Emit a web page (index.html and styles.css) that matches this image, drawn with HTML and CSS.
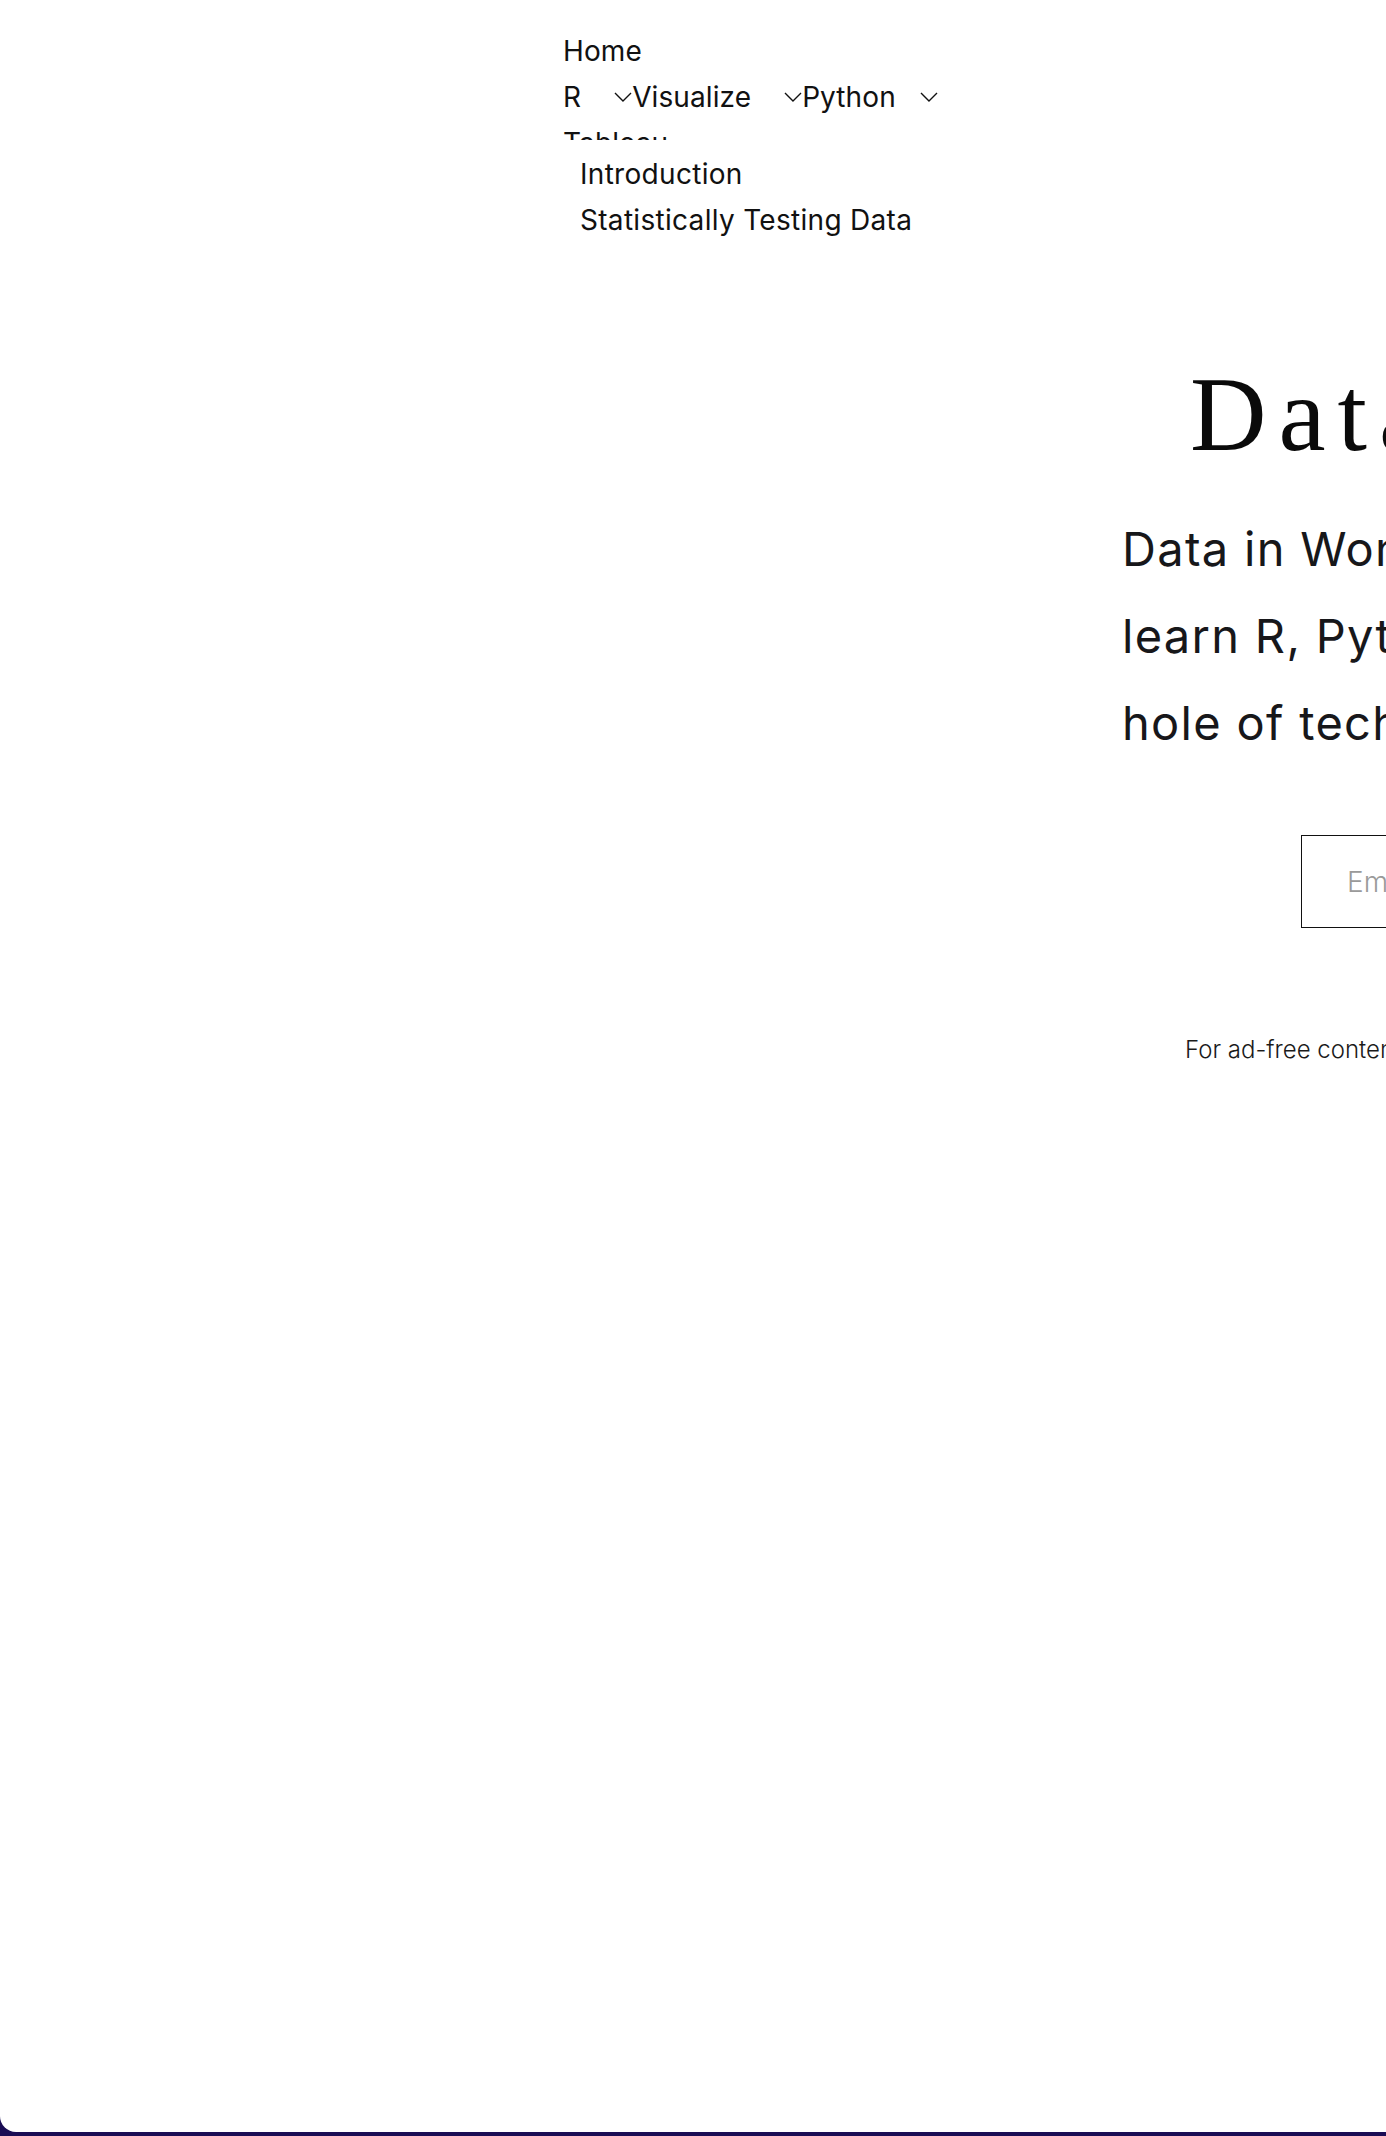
FILE: index.html
```html
<!DOCTYPE html>
<html lang="en">
<head>
<meta charset="utf-8">
<title>Data in Wonderland</title>
<link rel="stylesheet" href="styles.css">
</head>
<body>
<div class="page">
  <div class="layout">
    <aside class="sidebar">
      <nav class="nav">
        <div class="nav-row"><a class="nav-link" href="#">Home</a></div>
        <div class="nav-row">
          <div class="nav-item"><a class="nav-link" href="#">R</a><button class="toggle"><svg width="18" height="10" viewBox="0 0 18 10"><polyline points="1,1 9,9 17,1" fill="none" stroke="#111" stroke-width="1.4"/></svg></button></div>
          <div class="nav-item"><a class="nav-link" href="#">Visualize</a><button class="toggle"><svg width="18" height="10" viewBox="0 0 18 10"><polyline points="1,1 9,9 17,1" fill="none" stroke="#111" stroke-width="1.4"/></svg></button></div>
          <div class="nav-item"><a class="nav-link" href="#">Python</a><button class="toggle toggle-last"><svg width="18" height="10" viewBox="0 0 18 10"><polyline points="1,1 9,9 17,1" fill="none" stroke="#111" stroke-width="1.4"/></svg></button></div>
        </div>
        <div class="nav-row"><a class="nav-link" href="#">Tableau</a></div>
      </nav>
      <ul class="submenu">
        <li><a class="nav-link" href="#">Introduction</a></li>
        <li><a class="nav-link" href="#">Statistically Testing Data</a></li>
      </ul>
    </aside>
    <main class="hero">
      <h1 class="title">Data in Wonderland</h1>
      <p class="lead">
        <span class="line">Data in Wonderland is your guide to</span>
        <span class="line">learn R, Python, and Tableau and fall down the rabbit</span>
        <span class="line">hole of tech and data.</span>
      </p>
      <form class="signup">
        <input class="email" type="email" placeholder="Email address">
        <button class="subscribe" type="button">Subscribe</button>
      </form>
      <p class="note">For ad-free content and more, become a member.</p>
    </main>
  </div>
</div>
<footer class="footer"></footer>
</body>
</html>
```
FILE: styles.css
```css
html, body {
  margin: 0;
  padding: 0;
  overflow-x: hidden;
}
body {
  background: #1a0c54;
  font-family: Inter, "Noto Sans", sans-serif;
  color: #141414;
}
.page {
  width: 1800px;
  height: 2132px;
  background: #fff;
  border-radius: 0 0 16px 16px;
  overflow: hidden;
}
.layout {
  display: flex;
}
.sidebar {
  width: 559px;
  padding-left: 563px;
  flex: none;
}
.nav {
  height: 112px;
  padding-top: 28px;
  overflow: hidden;
}
.nav-row {
  display: flex;
  height: 46px;
  align-items: center;
}
.nav-item {
  display: flex;
  align-items: center;
}
.nav-link {
  font-size: 28px;
  letter-spacing: 0.3px;
  line-height: 46px;
  color: #111;
  text-decoration: none;
}
.nav-row .nav-link {
  letter-spacing: 0.1px;
}
.toggle {
  border: 0;
  background: none;
  padding: 0;
  margin-left: 33px;
  display: flex;
  align-items: center;
  height: 46px;
}
.toggle-last {
  margin-left: 24px;
}
.toggle svg { display: block; }
.submenu {
  list-style: none;
  margin: 11px 0 0;
  padding: 0 0 0 17px;
}
.submenu li {
  height: 46px;
  display: flex;
  align-items: center;
}
.hero {
  flex: none;
}
.title {
  margin: 362px 0 0 68px;
  font-family: "Liberation Serif", serif;
  font-weight: 400;
  font-size: 106px;
  line-height: 106px;
  letter-spacing: 12px;
  color: #0a0a0a;
  white-space: nowrap;
}
.lead {
  margin: 37px 0 0;
  font-size: 47px;
  letter-spacing: 1.3px;
  line-height: 87px;
  color: #17171a;
}
.line {
  display: block;
  white-space: nowrap;
}
.signup {
  display: flex;
  margin: 69px 0 0 179px;
}
.email {
  width: 420px;
  height: 93px;
  box-sizing: border-box;
  border: 1px solid #111;
  padding: 0 0 0 45px;
  font-family: Inter, sans-serif;
  font-size: 28px;
  font-weight: 300;
  outline: none;
}
.email::placeholder { color: #9a9a9a; }
.subscribe {
  height: 93px;
  padding: 0 40px;
  border: 0;
  background: #1a0c54;
  color: #fff;
  font-family: Inter, sans-serif;
  font-size: 24px;
}
.note {
  margin: 106px 0 0 63px;
  font-size: 24px;
  letter-spacing: 0;
  font-weight: 300;
  line-height: 32px;
  color: #1a1a1a;
  white-space: nowrap;
}
.footer {
  height: 300px;
  background: #1a0c54;
}
```
